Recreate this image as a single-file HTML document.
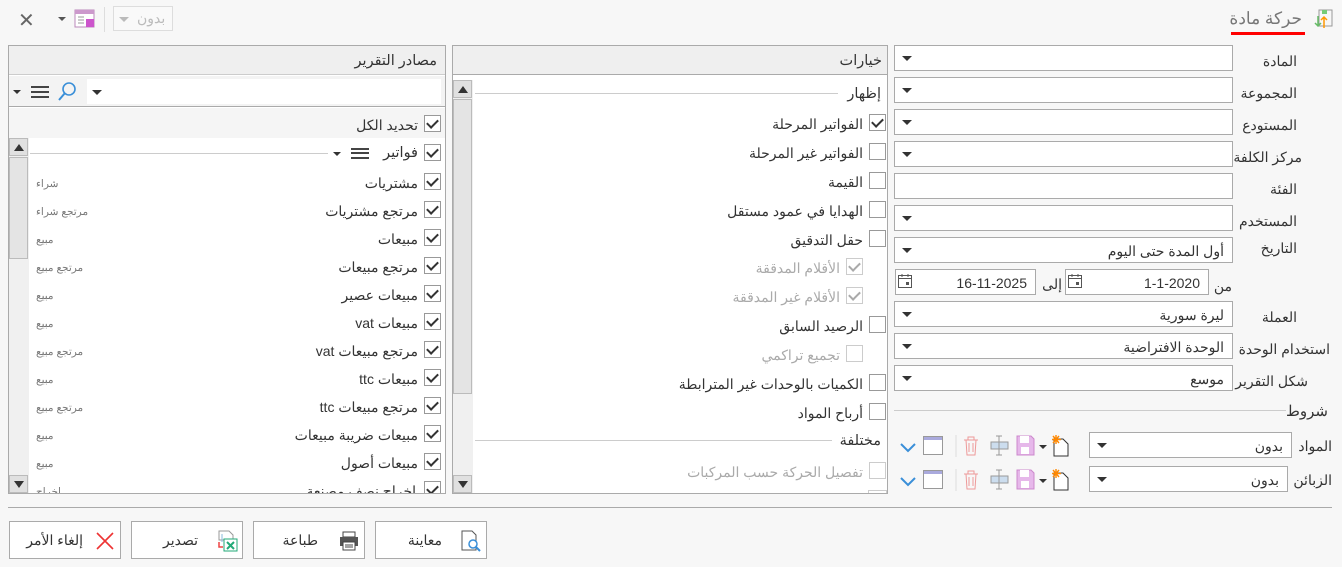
<!DOCTYPE html>
<html><head><meta charset="utf-8">
<style>
*{box-sizing:border-box;margin:0;padding:0}
body{width:1342px;height:567px;background:#f7f7f7;font-family:"Liberation Sans","Noto Sans CJK SC",sans-serif;font-size:14px;color:#333;position:relative;overflow:hidden}
.a{position:absolute}
.rt{direction:rtl;white-space:nowrap}
.inp{position:absolute;background:#fff;border:1px solid #aaa;height:26px}
.dd::after{content:"";position:absolute;left:7px;top:10px;border-left:5px solid transparent;border-right:5px solid transparent;border-top:5px solid #333}
.inp span{position:absolute;right:8px;top:5px;direction:rtl;white-space:nowrap}
.lbl{position:absolute;right:45px;direction:rtl;white-space:nowrap;font-size:14px;margin-top:3px}
.cb{position:absolute;width:17px;height:17px;border:1px solid #999;background:#fff}
.cb.c::after{content:"";position:absolute;left:4px;top:1px;width:5px;height:9px;border-right:2px solid #333;border-bottom:2px solid #333;transform:rotate(45deg)}
.cb.dis{border-color:#ccc}
.cb.dis.c::after{border-color:#aaa}
.txt{position:absolute;direction:rtl;white-space:nowrap;margin-top:3px}
.sm{position:absolute;left:36px;font-size:10.5px;color:#777;direction:rtl;white-space:nowrap;margin-top:2px}
.btn{position:absolute;top:521px;height:38px;width:112px;border:1px solid #aaa;background:#fff}
.btn span{position:absolute;top:10px;direction:rtl;white-space:nowrap}
.sb{position:absolute;background:#f0f0f0}
.arr{position:absolute;width:19px;height:18px;background:#e0e0e0;border:1px solid #bbb}
.up::after{content:"";position:absolute;left:4px;top:5px;border-left:5px solid transparent;border-right:5px solid transparent;border-bottom:7px solid #333}
.dn::after{content:"";position:absolute;left:4px;top:5px;border-left:5px solid transparent;border-right:5px solid transparent;border-top:7px solid #333}
.thumb{position:absolute;background:#e4e4e4;border:1px solid #bbb}
</style></head><body>

<!-- title -->
<div class="a rt" style="right:40px;top:9px;font-size:17px;color:#777">حركة مادة</div>
<div class="a" style="left:1231px;top:32px;width:74px;height:3px;background:#f00"></div>
<svg class="a" style="left:1313px;top:8px" width="22" height="22" viewBox="0 0 22 22"><rect x="6" y="2" width="13" height="16" fill="none" stroke="#999"/><rect x="9" y="2" width="5" height="4" fill="#7c7"/><path d="M5 8v10M2 15l3 3 3-3" stroke="#6b6" fill="none" stroke-width="1.5"/><path d="M11 20V9M8 12l3-3 3 3" stroke="#f90" fill="none" stroke-width="1.5"/></svg>

<!-- top-left toolbar -->
<div class="a" style="left:18px;top:8px;font-size:20px;color:#666">✕</div>
<div class="a" style="left:58px;top:17px;border-left:4px solid transparent;border-right:4px solid transparent;border-top:4px solid #555"></div>
<svg class="a" style="left:74px;top:9px" width="22" height="20"><rect x="1" y="1" width="19" height="17" fill="#fff" stroke="#b8b"/><rect x="1" y="1" width="19" height="4" fill="#c9c"/><path d="M4 8h6M4 11h6M4 14h6" stroke="#999"/><rect x="12" y="10" width="8" height="8" fill="#c5c"/></svg>
<div class="a" style="left:104px;top:7px;width:1px;height:25px;background:#ddd"></div>
<div class="a" style="left:113px;top:6px;width:60px;height:25px;border:1px solid #ddd;background:#f9f9f9"></div>
<div class="a rt" style="left:137px;top:10px;color:#bbb">بدون</div>
<div class="a" style="left:119px;top:17px;border-left:5px solid transparent;border-right:5px solid transparent;border-top:5px solid #bbb"></div>

<!-- LEFT PANEL -->
<div class="a" style="left:8px;top:45px;width:438px;height:449px;border:1px solid #aaa;background:#fff"></div>
<div class="a" style="left:9px;top:46px;width:436px;height:29px;background:#efefef;border-bottom:1px solid #ccc"></div>
<div class="txt" style="right:905px;top:50px;font-size:14.5px">مصادر التقرير</div>
<div class="a" style="left:9px;top:76px;width:436px;height:31px;background:#f3f3f3;border-bottom:1px solid #aaa"></div>
<div class="a" style="left:87px;top:79px;width:354px;height:25px;background:#fff"></div>
<div class="a" style="left:92px;top:90px;border-left:5px solid transparent;border-right:5px solid transparent;border-top:5px solid #333"></div>
<svg class="a" style="left:56px;top:81px" width="22" height="22"><circle cx="13" cy="8" r="6" fill="none" stroke="#3a8fd8" stroke-width="1.6"/><path d="M9 12l-6 7" stroke="#3a8fd8" stroke-width="2"/></svg>
<div class="a" style="left:31px;top:86px;width:18px;height:12px;border-top:2px solid #444;border-bottom:2px solid #444"></div>
<div class="a" style="left:31px;top:91px;width:18px;height:2px;background:#444"></div>
<div class="a" style="left:13px;top:90px;border-left:4px solid transparent;border-right:4px solid transparent;border-top:4px solid #333"></div>
<div class="a" style="left:9px;top:108px;width:436px;height:30px;background:#f5f5f5"></div>
<div class="cb c" style="left:424px;top:115px"></div>
<div class="txt" style="right:924px;top:114px">تحديد الكل</div>
<!-- scrollbar -->
<div class="sb" style="left:9px;top:138px;width:20px;height:355px"></div>
<div class="arr up" style="left:9px;top:138px"></div>
<div class="thumb" style="left:9px;top:157px;width:19px;height:102px"></div>
<div class="arr dn" style="left:9px;top:475px"></div>
<!-- fawatir header -->
<div class="cb c" style="left:424px;top:144px"></div>
<div class="txt" style="right:924px;top:142px;font-size:14.5px">فواتير</div>
<div class="a" style="left:351px;top:148px;width:18px;height:11px;border-top:2px solid #444;border-bottom:2px solid #444"></div>
<div class="a" style="left:351px;top:152px;width:18px;height:2px;background:#444"></div>
<div class="a" style="left:333px;top:152px;border-left:4px solid transparent;border-right:4px solid transparent;border-top:4px solid #333"></div>
<div class="a" style="left:30px;top:153px;width:298px;height:1px;background:#ccc"></div>

<div class="cb c" style="left:424px;top:173px"></div><div class="txt" style="right:924px;top:172px">مشتريات</div><div class="sm" style="top:176px">شراء</div>
<div class="cb c" style="left:424px;top:201px"></div><div class="txt" style="right:924px;top:200px">مرتجع مشتريات</div><div class="sm" style="top:204px">مرتجع شراء</div>
<div class="cb c" style="left:424px;top:229px"></div><div class="txt" style="right:924px;top:228px">مبيعات</div><div class="sm" style="top:232px">مبيع</div>
<div class="cb c" style="left:424px;top:257px"></div><div class="txt" style="right:924px;top:256px">مرتجع مبيعات</div><div class="sm" style="top:260px">مرتجع مبيع</div>
<div class="cb c" style="left:424px;top:285px"></div><div class="txt" style="right:924px;top:284px">مبيعات عصير</div><div class="sm" style="top:288px">مبيع</div>
<div class="cb c" style="left:424px;top:313px"></div><div class="txt" style="right:924px;top:312px">مبيعات vat</div><div class="sm" style="top:316px">مبيع</div>
<div class="cb c" style="left:424px;top:341px"></div><div class="txt" style="right:924px;top:340px">مرتجع مبيعات vat</div><div class="sm" style="top:344px">مرتجع مبيع</div>
<div class="cb c" style="left:424px;top:369px"></div><div class="txt" style="right:924px;top:368px">مبيعات ttc</div><div class="sm" style="top:372px">مبيع</div>
<div class="cb c" style="left:424px;top:397px"></div><div class="txt" style="right:924px;top:396px">مرتجع مبيعات ttc</div><div class="sm" style="top:400px">مرتجع مبيع</div>
<div class="cb c" style="left:424px;top:425px"></div><div class="txt" style="right:924px;top:424px">مبيعات ضريبة مبيعات</div><div class="sm" style="top:428px">مبيع</div>
<div class="cb c" style="left:424px;top:453px"></div><div class="txt" style="right:924px;top:452px">مبيعات أصول</div><div class="sm" style="top:456px">مبيع</div>
<div class="a" style="left:29px;top:478px;width:416px;height:15px;overflow:hidden">
  <div class="cb c" style="left:395px;top:3px"></div><div class="txt" style="right:29px;top:2px">إخراج نصف مصنعة</div><div class="sm" style="left:7px;top:6px">إخراج</div>
</div>

<!-- MIDDLE PANEL -->
<div class="a" style="left:452px;top:45px;width:436px;height:449px;border:1px solid #aaa;background:#fff"></div>
<div class="a" style="left:453px;top:46px;width:434px;height:29px;background:#efefef;border-bottom:1px solid #aaa"></div>
<div class="txt" style="right:460px;top:50px;font-size:14.5px">خيارات</div>
<div class="sb" style="left:453px;top:80px;width:20px;height:413px"></div>
<div class="arr up" style="left:453px;top:80px"></div>
<div class="thumb" style="left:453px;top:99px;width:19px;height:295px"></div>
<div class="arr dn" style="left:453px;top:475px"></div>
<div class="txt" style="right:461px;top:83px;font-size:14.5px">إظهار</div>
<div class="a" style="left:475px;top:93px;width:363px;height:1px;background:#ccc"></div>
<div class="cb c" style="left:869px;top:114px"></div><div class="txt" style="right:479px;top:113px">الفواتير المرحلة</div>
<div class="cb" style="left:869px;top:143px"></div><div class="txt" style="right:479px;top:142px">الفواتير غير المرحلة</div>
<div class="cb" style="left:869px;top:172px"></div><div class="txt" style="right:479px;top:171px">القيمة</div>
<div class="cb" style="left:869px;top:201px"></div><div class="txt" style="right:479px;top:200px">الهدايا في عمود مستقل</div>
<div class="cb" style="left:869px;top:230px"></div><div class="txt" style="right:479px;top:229px">حقل التدقيق</div>
<div class="cb dis c" style="left:846px;top:258px"></div><div class="txt" style="right:502px;top:257px;color:#aaa">الأقلام المدققة</div>
<div class="cb dis c" style="left:846px;top:287px"></div><div class="txt" style="right:502px;top:286px;color:#aaa">الأقلام غير المدققة</div>
<div class="cb" style="left:869px;top:316px"></div><div class="txt" style="right:479px;top:315px">الرصيد السابق</div>
<div class="cb dis" style="left:846px;top:345px"></div><div class="txt" style="right:502px;top:344px;color:#aaa">تجميع تراكمي</div>
<div class="cb" style="left:869px;top:374px"></div><div class="txt" style="right:479px;top:373px">الكميات بالوحدات غير المترابطة</div>
<div class="cb" style="left:869px;top:403px"></div><div class="txt" style="right:479px;top:402px">أرباح المواد</div>
<div class="txt" style="right:461px;top:430px;font-size:14.5px">مختلفة</div>
<div class="a" style="left:475px;top:440px;width:357px;height:1px;background:#ccc"></div>
<div class="cb dis" style="left:869px;top:462px"></div><div class="txt" style="right:479px;top:461px;color:#aaa">تفصيل الحركة حسب المركبات</div>
<div class="a" style="left:868px;top:490px;width:19px;height:3px;border:1px solid #ccc;border-bottom:none"></div>

<!-- RIGHT FORM -->
<div class="inp dd" style="left:894px;top:45px;width:339px"></div><div class="lbl" style="top:50px">المادة</div>
<div class="inp dd" style="left:894px;top:77px;width:339px"></div><div class="lbl" style="top:82px">المجموعة</div>
<div class="inp dd" style="left:894px;top:109px;width:339px"></div><div class="lbl" style="top:114px">المستودع</div>
<div class="inp dd" style="left:894px;top:141px;width:339px"></div><div class="lbl" style="top:146px;right:40px">مركز الكلفة</div>
<div class="inp" style="left:894px;top:173px;width:339px"></div><div class="lbl" style="top:178px">الفئة</div>
<div class="inp dd" style="left:894px;top:205px;width:339px"></div><div class="lbl" style="top:210px">المستخدم</div>
<div class="inp dd" style="left:894px;top:237px;width:339px"><span>أول المدة حتى اليوم</span></div><div class="lbl" style="top:237px">التاريخ</div>
<div class="inp" style="left:1065px;top:269px;width:144px"><span>1-1-2020</span></div>
<div class="inp" style="left:895px;top:269px;width:141px"><span>16-11-2025</span></div>
<svg class="a" style="left:1067px;top:273px" width="16" height="16"><rect x="1.5" y="2.5" width="13" height="12" fill="none" stroke="#555"/><path d="M1.5 5.5h13M5 1v3M11 1v3" stroke="#555"/><rect x="9" y="9" width="3" height="3" fill="#555"/></svg>
<svg class="a" style="left:897px;top:273px" width="16" height="16"><rect x="1.5" y="2.5" width="13" height="12" fill="none" stroke="#555"/><path d="M1.5 5.5h13M5 1v3M11 1v3" stroke="#555"/><rect x="9" y="9" width="3" height="3" fill="#555"/></svg>
<div class="txt" style="right:280px;top:273px">إلى</div>
<div class="txt" style="right:110px;top:275px">من</div>
<div class="inp dd" style="left:894px;top:301px;width:339px"><span>ليرة سورية</span></div><div class="lbl" style="top:306px">العملة</div>
<div class="inp dd" style="left:894px;top:333px;width:339px"><span>الوحدة الافتراضية</span></div><div class="lbl" style="top:338px;right:12px">استخدام الوحدة</div>
<div class="inp dd" style="left:894px;top:365px;width:339px"><span>موسع</span></div><div class="lbl" style="top:370px;right:34px">شكل التقرير</div>
<div class="txt" style="right:14px;top:399px;font-size:15px">شروط</div>
<div class="a" style="left:894px;top:410px;width:392px;height:1px;background:#ccc"></div>
<div class="inp dd" style="left:1089px;top:432px;width:203px"><span>بدون</span></div><div class="lbl" style="top:435px;right:10px">المواد</div>
<div class="inp dd" style="left:1089px;top:466px;width:199px"><span>بدون</span></div><div class="lbl" style="top:469px;right:10px">الزبائن</div>

<svg class="a" style="left:896px;top:432px" width="190" height="60">
 <g id="r">
  <path d="M5 12l7 7 7-7" fill="none" stroke="#3a8fd8" stroke-width="2"/>
  <rect x="27.5" y="4.5" width="19" height="18" fill="#fff" stroke="#999"/><rect x="28" y="5" width="18" height="3" fill="#aad"/>
  <path d="M60 3v22" stroke="#ddd"/>
  <path d="M68 8h14M72 8V5h6v3M70 8l1 15h8l1-15M73 11v9M77 11v9" fill="none" stroke="#e99"/>
  <rect x="95" y="10" width="17" height="7" fill="#cde" stroke="#999"/><path d="M103 4v19M100 4h6M100 23h6" stroke="#999"/>
  <path d="M121 4h14l3 3v16h-17z" fill="#e6b8ea" stroke="#c8c"/><rect x="124" y="4" width="9" height="7" fill="#fff"/><rect x="125" y="15" width="8" height="7" fill="#fff"/>
  <path d="M143 13l4 4 4-4z" fill="#333"/>
  <path d="M158 7h9l5 5v12h-14z" fill="#fff" stroke="#333"/>
  <path d="M160 3v9M156 7.5h9M157 4l6 7M163 4l-6 7" stroke="#f80" stroke-width="1.4"/>
 </g>
 <use href="#r" y="34"/>
</svg>

<div class="a" style="left:8px;top:507px;width:1324px;height:1px;background:#aaa"></div>

<div class="btn" style="left:375px"><span style="right:44px">معاينة</span>
<svg class="a" style="left:84px;top:8px" width="22" height="22"><path d="M2 1h10l4 4v15H2z" fill="#fff" stroke="#555"/><circle cx="13" cy="14" r="4" fill="#fff" stroke="#3a8fd8" stroke-width="1.5"/><path d="M16 17l4 4" stroke="#3a8fd8" stroke-width="2"/></svg></div>
<div class="btn" style="left:253px"><span style="right:46px">طباعة</span>
<svg class="a" style="left:84px;top:8px" width="22" height="22"><rect x="5" y="2" width="12" height="5" fill="#fff" stroke="#444"/><rect x="2" y="7" width="18" height="9" fill="#555"/><rect x="5" y="12" width="12" height="8" fill="#fff" stroke="#444"/><path d="M7 15h8M7 17h8" stroke="#444"/></svg></div>
<div class="btn" style="left:131px"><span style="right:44px">تصدير</span>
<svg class="a" style="left:84px;top:8px" width="22" height="22"><path d="M3 1h10l4 4v5H3z" fill="#fff" stroke="#999"/><path d="M6 4v8" stroke="#8bd"/><path d="M3 12v5h4" fill="none" stroke="#e44" stroke-width="1.5"/><rect x="8" y="9" width="13" height="12" fill="#fff" stroke="#2a7"/><path d="M11 12l7 7M18 12l-7 7" stroke="#2a7" stroke-width="2"/></svg></div>
<div class="btn" style="left:9px"><span style="right:37px">إلغاء الأمر</span>
<svg class="a" style="left:85px;top:9px" width="20" height="20"><path d="M2 2l16 16M18 2L2 18" stroke="#e33" stroke-width="1.6"/></svg></div>

</body></html>
